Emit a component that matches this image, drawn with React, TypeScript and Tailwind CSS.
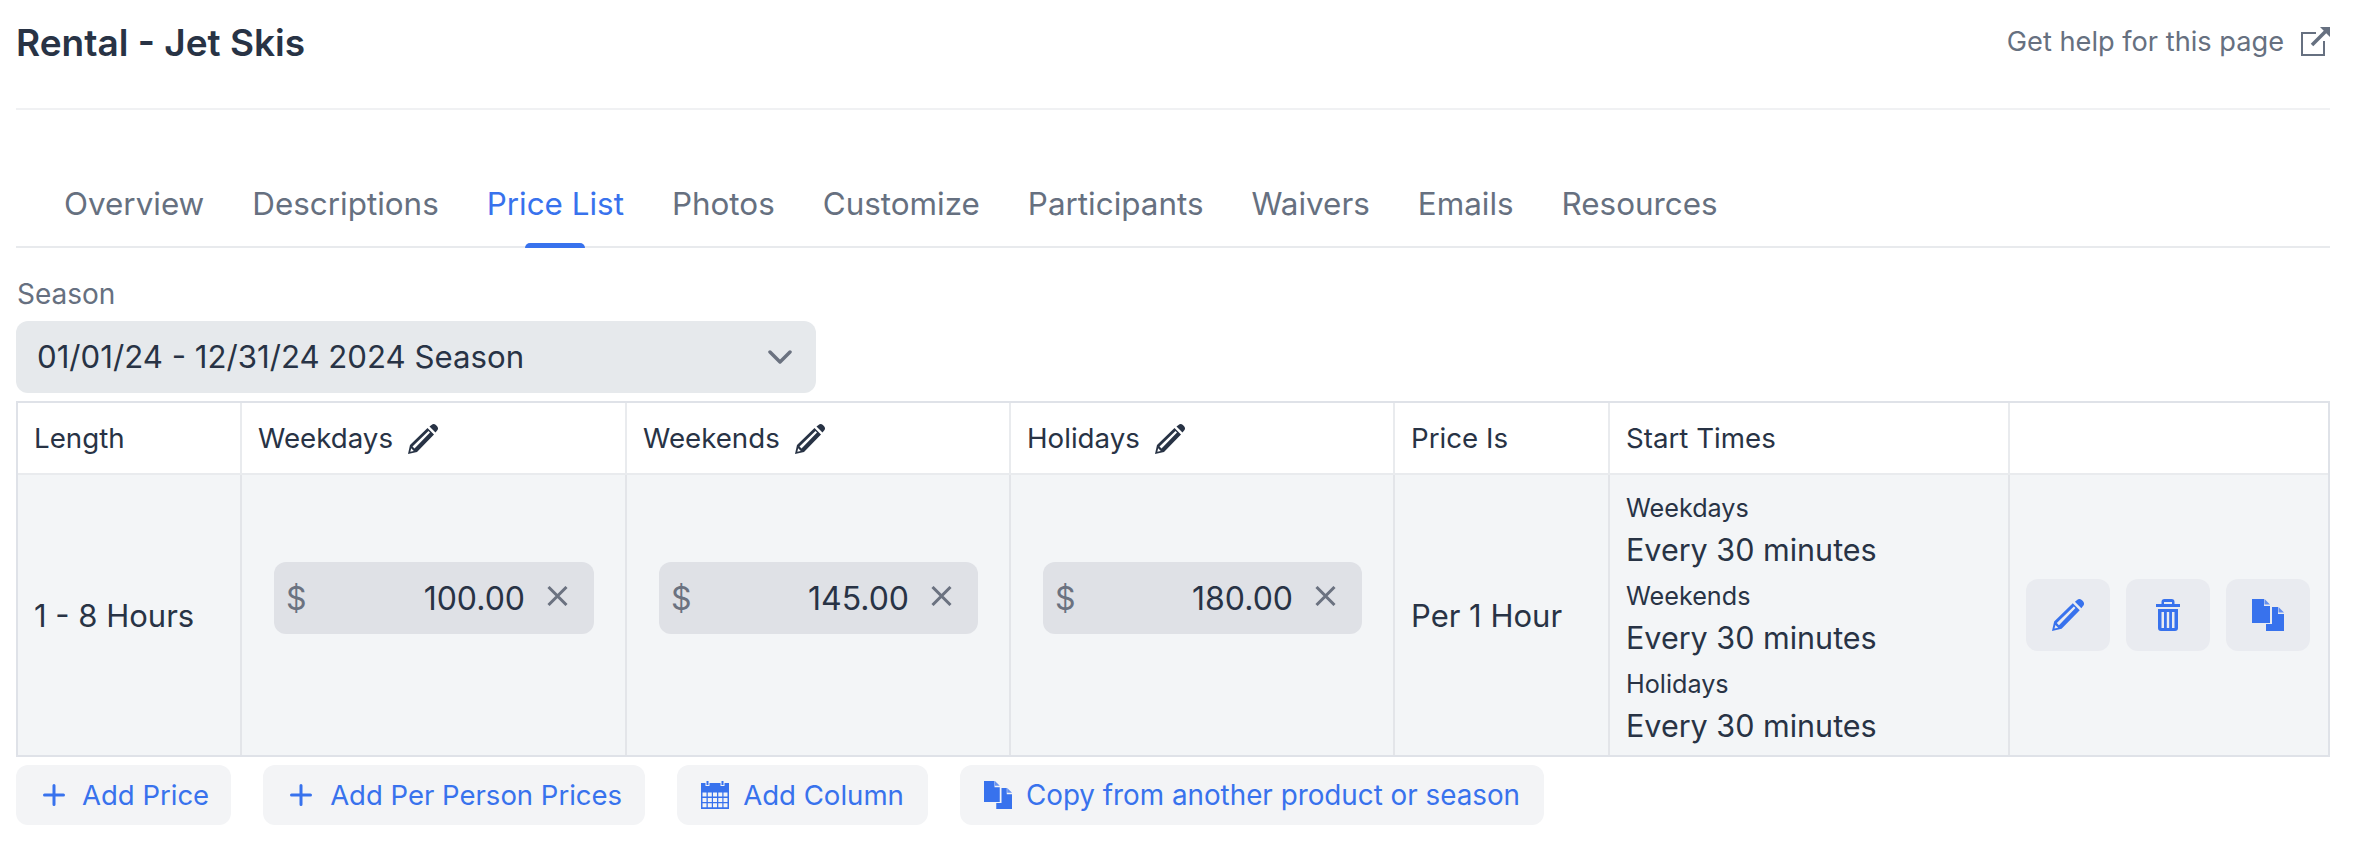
import React from 'react';

const tabs = ['Overview', 'Descriptions', 'Price List', 'Photos', 'Customize', 'Participants', 'Waivers', 'Emails', 'Resources'];
const prices = ['100.00', '145.00', '180.00'];
const startTimes = ['Weekdays', 'Weekends', 'Holidays'];

const PencilIcon = ({ className }: { className: string }) => (
  <svg viewBox="0 0 30 30" className={className} fill="currentColor">
    <path
      fillRule="evenodd"
      d="M0 30 2 21 19.5 4 26 10.5 9 28ZM4.5 22.5 6.5 24.5 22 8.500 20.5 7ZM2.300 27.700 5.800 26.900 3.200 24.300Z"
    />
    <path d="M21.500 2.500 23.500.9a3.400 3.400 0 0 1 4.400.1l1.200 1.200a3.400 3.400 0 0 1 0 4.400l-1.600 2Z" />
  </svg>
);

const TrashIcon = ({ className }: { className: string }) => (
  <svg viewBox="0 0 24 32" className={className} fill="currentColor">
    <path fillRule="evenodd" d="M5.500 5V3a3 3 0 0 1 3-3h7a3 3 0 0 1 3 3v2H24v3H0V5ZM8 5h8V3H8Z" />
    <path
      fillRule="evenodd"
      d="M2 10h20v19a3 3 0 0 1-3 3H5a3 3 0 0 1-3-3ZM5.500 13v16h2.500V13ZM10.800 13v16h2.400V13ZM16 13v16h2.500V13Z"
    />
  </svg>
);

const CopyIcon = ({ className }: { className: string }) => (
  <svg viewBox="0 0 32 32" className={className} fill="currentColor">
    <path d="M0 0h12v7h6v17H0Z" />
    <path d="M12.500 0 18 5.500h-5.500Z" opacity="0.75" />
    <path d="M20 8h6v7h6v17H14v-7h6Z" />
    <path d="M26.500 8 32 13.500h-5.500Z" opacity="0.75" />
  </svg>
);

const CalendarIcon = ({ className }: { className: string }) => (
  <svg viewBox="0 0 28 28" className={className} fill="currentColor">
    <path
      fillRule="evenodd"
      d="M0 2h4.500v3h4V2h11v3h4V2H28v26H0ZM1.500 11.500v4h4v-4ZM6.800 11.500v4h4v-4ZM12 11.500v4h4v-4ZM17.300 11.500v4h4v-4ZM22.500 11.500v4h4v-4ZM1.500 17v4h4v-4ZM6.800 17v4h4v-4ZM12 17v4h4v-4ZM17.300 17v4h4v-4ZM22.500 17v4h4v-4ZM1.500 22.300v4h4v-4ZM6.800 22.300v4h4v-4ZM12 22.300v4h4v-4ZM17.300 22.300v4h4v-4ZM22.500 22.300v4h4v-4Z"
    />
    <path d="M5.500 0h2v4h-2ZM20.500 0h2v4h-2Z" />
  </svg>
);

const PlusIcon = () => (
  <svg viewBox="0 0 22 22" className="w-[22px] h-[22px]" fill="none" stroke="currentColor" strokeWidth="3" strokeLinecap="round">
    <path d="M11 1.500v19M1.500 11h19" />
  </svg>
);

const ActionButton = ({ icon, label, className }: { icon: React.ReactNode; label: string; className: string }) => (
  <button className={`flex items-center h-[60px] rounded-[12px] bg-[#f3f4f6] text-[#3872ed] ${className}`}>
    {icon}
    <span className="mt-[2px]">{label}</span>
  </button>
);

export default function App() {
  return (
    <div className="min-h-[850px] bg-white pl-4 pr-8 text-[#283345] font-['Inter',sans-serif]">
      <div className="flex items-center justify-between h-[110px] pb-[24px] border-b-2 border-[#f0f1f3]">
        <h1 className="text-[37px] font-semibold leading-none">Rental - Jet Skis</h1>
        <a className="flex items-center gap-[17px] text-[#667080] text-[27.2px]">
          Get help for this page
          <svg viewBox="0 0 29 29" className="w-[29px] h-[29px]" fill="none" stroke="currentColor">
            <path d="M23 14v14H1V6h14" strokeWidth="2" />
            <path d="M11 18 25 4" strokeWidth="3.500" />
            <path d="M19 0h10v10Z" fill="currentColor" stroke="none" />
          </svg>
        </a>
      </div>

      <div className="flex pl-6 h-[92px] mt-[46px] items-center border-b-2 border-[#e8eaed] pt-[7px]">
        {tabs.map((tab) => (
          <div
            key={tab}
            className={`relative h-full flex items-center px-[24px] text-[31.4px] ${tab === 'Price List' ? 'text-[#3872ed]' : 'text-[#667080]'}`}
          >
            {tab}
            {tab === 'Price List' && (
              <span className="absolute left-1/2 -translate-x-1/2 -bottom-[2px] w-[60px] h-[5px] rounded-t-[5px] bg-[#3872ed]" />
            )}
          </div>
        ))}
      </div>

      <div className="mt-[31px] ml-[1px] text-[28px] leading-[30px] text-[#667080]">Season</div>
      <div className="flex items-center justify-between w-[800px] h-[72px] mt-[12px] pl-[21px] pr-[24px] rounded-[12px] bg-[#e6e9ec] text-[31.2px]">
        <span>01/01/24 - 12/31/24 2024 Season</span>
        <svg viewBox="0 0 24 14" className="w-[24px] h-[14px]" fill="none" stroke="#6b7280" strokeWidth="3.500" strokeLinecap="round" strokeLinejoin="round">
          <path d="M2 2l10 10L22 2" />
        </svg>
      </div>

      <div className="mt-2 border-2 border-[#dfe2e8]">
        <table className="table-fixed w-full border-separate border-spacing-0">
          <colgroup>
            <col className="w-[224px]" />
            <col className="w-[385px]" />
            <col className="w-[384px]" />
            <col className="w-[384px]" />
            <col className="w-[215px]" />
            <col className="w-[400px]" />
            <col className="w-[318px]" />
          </colgroup>
          <thead>
            <tr className="h-[72px] text-[27.7px] text-left">
              <th className="font-normal px-[16px] pt-[2px] border-r-2 border-b-2 border-[#e9ebee]">Length</th>
              {startTimes.map((name) => (
                <th key={name} className="font-normal px-[16px] pt-[2px] border-r-2 border-b-2 border-[#e9ebee]">
                  <div className="flex items-center gap-[15px]">
                    {name}
                    <PencilIcon className="w-[30px] h-[30px]" />
                  </div>
                </th>
              ))}
              <th className="font-normal px-[16px] pt-[2px] border-r-2 border-b-2 border-[#e9ebee]">Price Is</th>
              <th className="font-normal px-[16px] pt-[2px] border-r-2 border-b-2 border-[#e9ebee]">Start Times</th>
              <th className="border-b-2 border-[#e9ebee]" />
            </tr>
          </thead>
          <tbody>
            <tr className="h-[280px] bg-[#f3f5f7] text-[31px]">
              <td className="px-[16px] pt-[2px] border-r-2 border-[#e3e5e9]">1 - 8 Hours</td>
              {prices.map((price) => (
                <td key={price} className="pl-[32px] pr-[31px] border-r-2 border-[#e3e5e9]">
                  <div className="flex items-center h-[72px] mb-[34px] pl-[12px] pr-[26px] rounded-[12px] bg-[#dfe1e6] text-[32px]">
                    <span className="text-[#6b7280] mt-[2px]">$</span>
                    <span className="ml-auto mt-[2px]">{price}</span>
                    <svg viewBox="0 0 21 20" className="w-[21px] h-[20px] ml-[22px] -mt-[4px]" fill="none" stroke="#6b7280" strokeWidth="3">
                      <path d="M1.500 1 19.500 19M19.500 1 1.500 19" />
                    </svg>
                  </div>
                </td>
              ))}
              <td className="px-[16px] pt-[2px] border-r-2 border-[#e3e5e9]">Per 1 Hour</td>
              <td className="px-[16px] pt-[16px] border-r-2 border-[#e3e5e9]">
                <div className="flex flex-col gap-[4px]">
                  {startTimes.map((name) => (
                    <div key={name}>
                      <div className="text-[25.2px] leading-[30px]">{name}</div>
                      <div className="text-[30.500px] leading-[54px]">Every 30 minutes</div>
                    </div>
                  ))}
                </div>
              </td>
              <td className="pl-[16px]">
                <div className="flex gap-[16px]">
                  <button className="flex items-center justify-center w-[84px] h-[72px] rounded-[12px] bg-[#e9ebf0] text-[#3872ed]">
                    <PencilIcon className="w-[32px] h-[32px]" />
                  </button>
                  <button className="flex items-center justify-center w-[84px] h-[72px] rounded-[12px] bg-[#e9ebf0] text-[#3872ed]">
                    <TrashIcon className="w-[24px] h-[32px]" />
                  </button>
                  <button className="flex items-center justify-center w-[84px] h-[72px] rounded-[12px] bg-[#e9ebf0] text-[#3872ed]">
                    <CopyIcon className="w-[32px] h-[32px]" />
                  </button>
                </div>
              </td>
            </tr>
          </tbody>
        </table>
      </div>

      <div className="flex gap-[32px] mt-2">
        <ActionButton className="pl-[27px] pr-[22px] gap-[17px] text-[27.5px]" icon={<PlusIcon />} label="Add Price" />
        <ActionButton className="pl-[27px] pr-[23px] gap-[18px] text-[27.5px]" icon={<PlusIcon />} label="Add Per Person Prices" />
        <ActionButton className="pl-[24px] pr-[24px] gap-[14px] text-[27.6px]" icon={<CalendarIcon className="w-[28px] h-[28px]" />} label="Add Column" />
        <ActionButton className="pl-[24px] pr-[24px] gap-[14px] text-[27.8px]" icon={<CopyIcon className="w-[28px] h-[28px]" />} label="Copy from another product or season" />
      </div>
    </div>
  );
}
